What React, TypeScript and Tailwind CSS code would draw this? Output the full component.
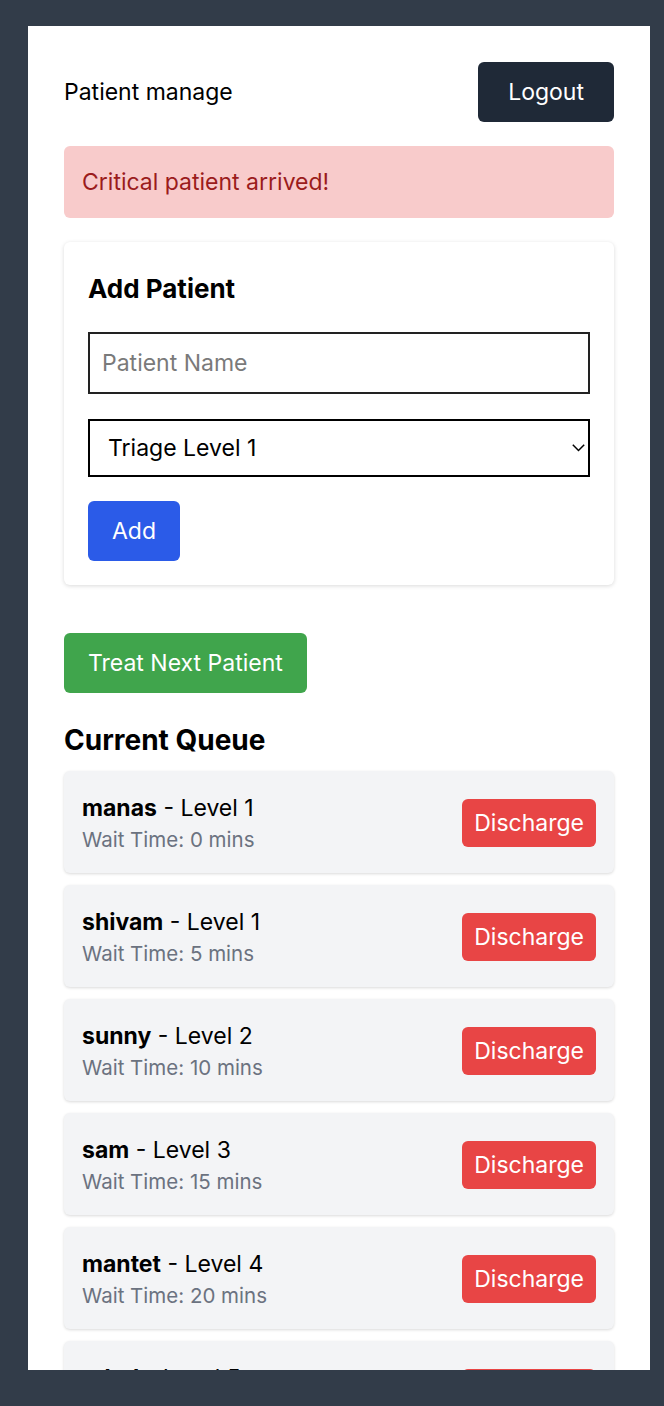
const queue = [
  { name: 'manas', level: 1, wait: 0 },
  { name: 'shivam', level: 1, wait: 5 },
  { name: 'sunny', level: 2, wait: 10 },
  { name: 'sam', level: 3, wait: 15 },
  { name: 'mantet', level: 4, wait: 20 },
  { name: 'rahul', level: 5, wait: 25 },
]

export default function App() {
  return (
    <div
      className="w-[664px] h-[1406px] bg-[#323c49] pt-[26px] pl-[28px]"
      style={{ fontFamily: 'Inter, "Noto Sans", sans-serif' }}
    >
      <div className="w-[622px] h-[1344px] bg-white overflow-hidden px-9 pt-9">
        <div className="flex items-center justify-between">
          <span className="text-[23px] text-black">Patient manage</span>
          <button className="h-[60px] px-[30px] rounded-md bg-[#1f2937] text-white text-[23px]">
            Logout
          </button>
        </div>

        <div className="mt-6 rounded-md bg-[#f8cbcb] px-[18px] py-5 text-[23px] leading-8 text-[#9b1c1c]">
          Critical patient arrived!
        </div>

        <div className="mt-6 rounded-md bg-white shadow-[0_1px_4px_rgba(0,0,0,0.15)] p-6">
          <h2 className="text-[26px] font-bold leading-[46px] text-black mb-5">Add Patient</h2>
          <input
            placeholder="Patient Name"
            className="block w-full h-[62px] border-2 border-[#222] px-3 text-[23px] text-black placeholder:text-[#7a7a7a] outline-none"
          />
          <div className="relative mt-[25px]">
            <select className="block w-full h-[58px] appearance-none border-2 border-black bg-white pl-[18px] text-[23px] text-black outline-none">
              <option>Triage Level 1</option>
              <option>Triage Level 2</option>
              <option>Triage Level 3</option>
              <option>Triage Level 4</option>
              <option>Triage Level 5</option>
            </select>
            <svg
              width="13"
              height="8"
              viewBox="0 0 13 8"
              className="absolute right-[5px] top-[25px] pointer-events-none"
            >
              <polyline points="0.8,0.8 6.5,6.5 12.2,0.8" fill="none" stroke="#000" strokeWidth="1.5" />
            </svg>
          </div>
          <button className="mt-6 h-[60px] px-6 rounded-md bg-[#2b5be8] text-white text-[23px]">Add</button>
        </div>

        <button className="mt-12 h-[60px] px-6 rounded-md bg-[#40a54c] text-white text-[23px]">
          Treat Next Patient
        </button>

        <h2 className="mt-[29px] mb-[13px] text-[28px] font-bold leading-9 text-black">Current Queue</h2>

        <div className="flex flex-col gap-3">
          {queue.map((p) => (
            <div
              key={p.name}
              className="flex items-center justify-between rounded-md bg-[#f3f4f6] shadow-[0_1px_3px_rgba(0,0,0,0.15)] px-[18px] pt-[21px] pb-[19px]"
            >
              <div>
                <p className="text-[23px] leading-8 text-black">
                  <span className="font-bold">{p.name}</span> - Level {p.level}
                </p>
                <p className="mt-[2px] text-[20.5px] leading-7 text-[#6b7280]">Wait Time: {p.wait} mins</p>
              </div>
              <button className="h-12 px-3 rounded-md bg-[#e84545] text-white text-[23px]">Discharge</button>
            </div>
          ))}
        </div>
      </div>
    </div>
  )
}
